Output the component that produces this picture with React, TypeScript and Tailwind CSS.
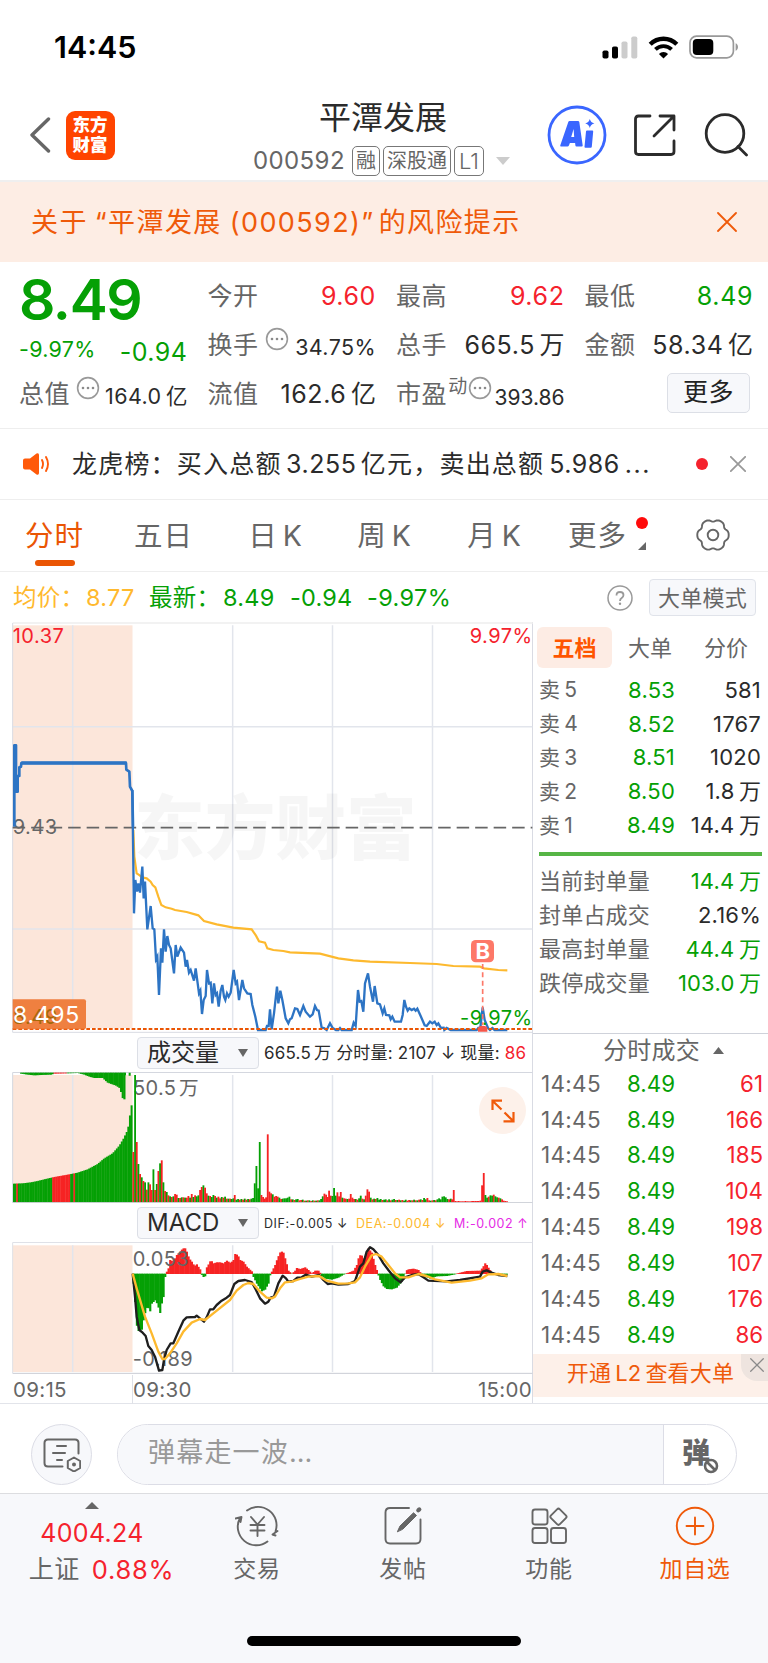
import type { ReactNode } from 'react';

// ─── Types ────────────────────────────────────────────────────────────────────

type Tone = 'up' | 'down' | 'ink';

interface Bar {
  x: number;
  y: number;
  up: boolean;
}

// ─── Quote data ───────────────────────────────────────────────────────────────

const ASKS = [
  { level: 5, price: '8.53', volume: '581' },
  { level: 4, price: '8.52', volume: '1767' },
  { level: 3, price: '8.51', volume: '1020' },
  { level: 2, price: '8.50', volume: '1.8万' },
  { level: 1, price: '8.49', volume: '14.4万' },
];

const LIMIT_STATS: { label: string; value: string; tone: Tone }[] = [
  { label: '当前封单量', value: '14.4万', tone: 'down' },
  { label: '封单占成交', value: '2.16%', tone: 'ink' },
  { label: '最高封单量', value: '44.4万', tone: 'down' },
  { label: '跌停成交量', value: '103.0万', tone: 'down' },
];

const TICKS = ['61', '166', '185', '104', '198', '107', '176', '86'];

const TONES: Record<Tone, string> = {
  up: 'text-[#f5222d]',
  down: 'text-[#05a005]',
  ink: 'text-[#2b2b2b]',
};

// ─── Chart data ───────────────────────────────────────────────────────────────
// All chart coordinates are in plot units, three to a CSS pixel.

const AUCTION_LINE =
  '43,770 43,526 48,526 48,665 53,665 53,618 58,618 58,592 63,590 64,579 378,579 379,599 388,605 390,650 397,663 399,770';

const PRICE_LINE =
  '397,660 402,1030 406,930 411,965 415,940 420,968 427,890 431,985 435,935 442,1078 452,1008 458,1075 463,1078 468,1168 472,1160 477,1275 483,1135 487,1178 492,1078 497,1145 502,1098 507,1125 512,1135 522,1210 527,1125 532,1160 542,1133 552,1148 557,1190 561,1170 567,1208 572,1200 582,1232 587,1195 597,1270 601,1262 606,1332 611,1290 617,1278 621,1200 627,1240 632,1238 637,1300 642,1240 647,1275 651,1270 656,1310 662,1262 667,1245 672,1280 676,1290 681,1270 686,1280 692,1268 701,1200 707,1240 711,1235 717,1290 727,1230 732,1255 742,1270 752,1272 757,1305 766,1340 774,1380 797,1380 801,1368 806,1368 810,1318 815,1378 822,1330 831,1250 835,1300 841,1262 847,1290 857,1345 865,1360 870,1348 875,1345 885,1315 892,1317 900,1335 910,1308 917,1325 930,1340 938,1333 945,1308 951,1320 956,1322 965,1373 972,1374 980,1380 990,1360 998,1374 1008,1380 1015,1380 1020,1374 1025,1380 1055,1380 1061,1358 1067,1368 1074,1260 1079,1295 1084,1293 1090,1325 1095,1240 1104,1210 1110,1250 1119,1295 1124,1248 1132,1300 1140,1303 1148,1330 1153,1315 1158,1335 1168,1336 1172,1348 1177,1340 1184,1355 1203,1355 1208,1335 1213,1290 1218,1310 1223,1322 1228,1315 1235,1320 1242,1316 1247,1322 1252,1316 1262,1338 1274,1366 1280,1368 1290,1355 1297,1360 1304,1355 1310,1365 1315,1360 1323,1374 1331,1373 1333,1380 1340,1374 1352,1380 1430,1380 1435,1374 1441,1374 1448,1312 1454,1350 1464,1374 1470,1380 1477,1374 1484,1380 1522,1380';

const AVERAGE_LINE =
  '400,780 403,860 410,910 418,915 425,922 440,925 452,935 458,945 466,952 475,980 484,1005 497,1012 515,1016 525,1020 560,1026 595,1036 612,1053 650,1063 700,1073 755,1078 768,1097 777,1114 795,1118 802,1135 820,1140 850,1143 870,1147 960,1151 980,1156 1015,1165 1060,1171 1110,1175 1230,1179 1310,1182 1360,1188 1440,1190 1452,1195 1495,1200 1522,1201';

const DIF_LINE =
  '398,731 405,800 410,860 418,900 428,908 437,918 445,948 455,960 465,980 477,1022 487,1020 492,990 500,960 512,940 520,940 535,905 550,872 560,862 585,861 590,857 600,865 612,875 620,862 630,838 640,838 650,825 665,812 680,803 690,795 703,762 715,753 735,750 755,756 768,780 780,805 795,821 805,815 812,803 822,800 835,760 848,737 858,745 865,755 880,753 892,743 905,742 917,734 935,740 958,735 970,750 983,762 995,760 1015,764 1045,762 1065,753 1080,710 1090,700 1100,665 1110,652 1120,658 1135,675 1150,700 1165,720 1185,745 1202,757 1215,742 1235,735 1255,732 1275,745 1285,752 1340,754 1380,750 1440,740 1448,725 1460,721 1475,728 1495,735 1522,738';

const DEA_LINE =
  '398,731 410,775 435,860 455,910 475,965 487,987 495,987 510,970 530,940 550,905 575,878 600,867 615,870 640,850 690,810 710,782 730,765 745,759 760,762 780,785 800,803 815,805 825,800 840,775 855,757 875,755 900,747 925,740 958,738 980,752 1015,761 1045,760 1065,757 1080,742 1095,710 1115,676 1128,672 1145,680 1165,705 1185,730 1200,742 1225,742 1255,732 1280,738 1305,748 1355,758 1410,752 1445,745 1465,733 1495,732 1522,738';

const MACD_SHAPE =
  '400,760 405,815 408,880 415,902 425,898 430,870 437,840 442,828 450,843 455,820 465,810 472,822 480,848 487,808 492,795 495,740 500,725 505,715 510,690 520,695 530,675 540,665 548,655 555,655 560,665 567,685 575,695 583,708 590,703 600,718 603,731 610,740 615,738 620,712 627,700 632,690 640,700 650,697 660,697 670,700 680,692 690,698 695,695 700,690 705,672 713,675 720,690 730,695 740,710 755,724 760,740 770,760 785,783 795,778 805,760 810,735 815,725 825,705 832,685 842,663 850,668 858,695 865,722 875,731 885,722 890,714 900,717 915,712 925,720 935,730 945,722 955,722 962,731 965,738 975,745 995,748 1015,742 1030,733 1045,728 1060,722 1070,705 1075,685 1082,672 1090,685 1095,680 1105,655 1115,668 1125,705 1132,726 1138,745 1150,768 1160,776 1175,777 1190,772 1200,760 1212,745 1217,722 1225,718 1240,716 1255,720 1262,729 1270,737 1290,745 1310,738 1340,737 1365,732 1380,728 1400,723 1440,722 1448,712 1455,700 1460,705 1468,718 1475,727 1490,733 1525,733';

const AUCTION_VOLUME =
  '39,461 65,460 90,457 110,453 130,448 160,441 205,433 230,428 260,418 290,402 310,385 335,370 355,347 368,325 380,300 385,275 390,226 393,226';

const AUCTION_UNMATCHED =
  '60,131 80,134 100,136 120,135 150,134 160,131 200,130 230,129 250,134 265,140 280,144 305,144 320,158 345,167 357,175 366,208 371,208';

// x:top followed by r (up) or g (down)
const VOLUME_BARS =
  '400:366r 405:135g 410:336r 415:402g 420:432r 425:442g 430:453r 435:457g 440:479r 445:457g 450:463r 455:480r 460:418g 465:480r 470:462g 475:423r 480:400g 485:391r 490:457g 495:483r 500:486g 505:496r 510:499g 515:501r 520:499g 525:492r 530:494r 535:504g 540:504r 545:502g 550:502r 555:503g 560:503r 565:498r 570:503g 575:492r 580:501g 585:496r 590:499g 595:496g 600:480r 605:471r 610:466g 615:473r 620:490r 625:497g 630:498r 635:501g 640:495g 645:498r 650:503g 655:500r 660:505r 665:501g 670:503r 675:500g 680:506r 685:506g 690:506r 695:507g 700:505g 704:495r 709:509g 714:507g 719:509r 724:507g 729:509r 734:506g 739:509r 744:507g 749:508r 754:506g 759:504g 764:460g 769:408g 774:475g 779:336g 784:495r 789:501r 794:506r 798:502r 803:313r 808:485r 813:490r 818:493g 823:500r 828:498r 833:500r 838:503g 843:507r 848:506g 853:505g 858:505g 863:503g 868:500g 873:508r 878:508g 883:510r 888:508g 893:507g 898:511r 903:510r 908:509g 913:512r 918:512g 923:511r 928:511g 933:513r 938:511g 943:512r 948:512g 953:511r 958:511g 963:507g 968:499g 973:491r 978:494r 983:501r 987:482r 992:497r 997:498g 1002:474g 1007:497g 1012:487r 1017:499r 1022:486r 1027:503g 1032:505r 1037:506r 1042:507g 1047:506r 1052:492r 1057:503r 1062:507r 1067:507g 1072:509r 1077:505g 1082:497g 1087:506r 1092:508g 1097:497r 1102:478r 1107:485r 1112:503g 1117:508r 1122:506g 1127:507r 1132:504g 1137:509g 1142:507g 1147:510r 1152:509g 1157:508g 1162:511r 1167:508g 1172:511r 1177:509g 1182:507g 1187:510r 1192:510g 1197:509r 1202:511g 1207:510r 1212:512g 1217:509g 1222:512r 1227:510r 1232:511g 1237:511r 1242:509g 1247:511r 1252:511g 1257:509r 1262:508g 1267:510r 1272:504g 1277:508g 1282:504r 1287:511r 1292:512g 1297:511r 1302:510g 1307:511r 1312:508g 1317:505g 1322:508g 1327:500g 1332:499g 1337:502g 1342:507g 1347:508r 1352:506g 1356:508r 1361:480r 1366:513r 1371:514r 1376:513r 1381:514r 1386:514r 1391:514r 1396:513r 1401:514r 1406:514r 1411:514r 1416:513r 1421:513r 1426:513r 1431:513r 1436:513r 1441:512r 1446:466r 1451:429r 1456:495g 1461:503g 1466:500r 1471:496g 1476:497g 1481:494r 1486:499g 1491:502g 1496:503r 1501:505g 1506:508r 1511:512r 1516:513r 1521:514r';

function samples(points: string, step: number) {
  const pts = points.split(' ').map((p) => p.split(',').map(Number));
  const out: { x: number; y: number }[] = [];
  let i = 0;
  for (let x = pts[0][0]; x < pts[pts.length - 1][0]; x += step) {
    while (pts[i + 1][0] < x) i++;
    const [x0, y0] = pts[i];
    const [x1, y1] = pts[i + 1];
    out.push({ x, y: y0 + ((y1 - y0) * (x - x0)) / (x1 - x0) });
  }
  return out;
}

const volumeBars: Bar[] = VOLUME_BARS.split(' ').map((entry) => {
  const [x, rest] = entry.split(':');
  return { x: Number(x), y: parseInt(rest, 10), up: rest.endsWith('r') };
});

const auctionIsUp = (x: number) => (x >= 44 && x < 49) || (x >= 154 && x < 210) || (x >= 219 && x < 224);

// Six-lobed gear outline, radius swinging around 15px
const GEAR_POINTS = Array.from({ length: 90 }, (_, i) => {
  const a = (i * Math.PI) / 45;
  const r = 14.8 + 1.2 * Math.cos(6 * a) - 0.3 * Math.cos(12 * a);
  return `${(17 + r * Math.cos(a)).toFixed(2)},${(17 + r * Math.sin(a)).toFixed(2)}`;
}).join(' ');

// ─── Small pieces ─────────────────────────────────────────────────────────────

/** Number with its 万 / 亿 unit set slightly apart */
function Figure({ value }: { value: string }) {
  const unit = value.match(/[万亿]$/)?.[0];
  return (
    <>
      {unit ? value.slice(0, -1) : value}
      {unit && <span className="ml-[4.5px] tracking-normal">{unit}</span>}
    </>
  );
}

function MoreDots({ className }: { className?: string }) {
  return (
    <svg className={`w-6 h-6 shrink-0 ${className ?? ''}`} viewBox="0 0 24 24" fill="none" stroke="#999" strokeWidth={1.6}>
      <circle cx="12" cy="12" r="10.4" />
      <g fill="#8a8a8a" stroke="none">
        <circle cx="7" cy="12" r="1.3" />
        <circle cx="12" cy="12" r="1.3" />
        <circle cx="17" cy="12" r="1.3" />
      </g>
    </svg>
  );
}

function Cross({ className, width }: { className: string; width: number }) {
  return (
    <svg className={className} viewBox="0 0 20 20" fill="none" stroke="currentColor" strokeWidth={width} strokeLinecap="round">
      <path d="M1 1 19 19M19 1 1 19" />
    </svg>
  );
}

// ─── Status bar and header ────────────────────────────────────────────────────

function StatusBar() {
  return (
    <div className="flex h-[94px] items-center justify-between pl-[54px] pr-[29px]">
      <span className="text-[30.5px] leading-none font-semibold text-black">14:45</span>
      <div className="flex items-center gap-[10px]">
        <svg className="h-[23px] w-9" viewBox="0 0 36 23">
          <rect x="0.5" y="14.5" width="6" height="8" rx="1.8" fill="#000" />
          <rect x="10" y="10.5" width="6" height="12" rx="1.8" fill="#000" />
          <rect x="19.5" y="5.5" width="6" height="17" rx="1.8" fill="#ccc" />
          <rect x="29.3" y="0.5" width="6" height="22" rx="1.8" fill="#ccc" />
        </svg>
        <svg className="h-[23px] w-[31px]" viewBox="0 0 31 23" fill="none" stroke="#000">
          <path d="M2.2 8.2a19 19 0 0 1 26.6 0" strokeWidth="4.4" />
          <path d="M7.4 13.4a11.6 11.6 0 0 1 16.2 0" strokeWidth="3.8" />
          <path d="M15.5 22.5 10.9 17.9a6.6 6.6 0 0 1 9.2 0z" fill="#000" stroke="none" />
        </svg>
        <svg className="h-6 w-[50px]" viewBox="0 0 50 24">
          <rect x="1" y="1.2" width="43.4" height="21.6" rx="6.5" fill="none" stroke="#999" strokeWidth="1.7" />
          <rect x="3.8" y="4" width="20.5" height="16" rx="4" fill="#000" />
          <path d="M46.6 8.2v7.6c1.5-.6 2.4-2 2.4-3.8s-.9-3.2-2.4-3.8z" fill="#999" />
        </svg>
      </div>
    </div>
  );
}

function Badge({ children }: { children: ReactNode }) {
  return (
    <span className="flex h-[30px] items-center rounded-[5px] border border-[#777] px-[3px] text-[20px] leading-none text-[#666]">
      {children}
    </span>
  );
}

function Header() {
  return (
    <header className="flex h-[88px] items-center border-b-2 border-[#efefef] pl-[29px] pr-[20px]">
      <svg className="mt-[-4px] h-9 w-[22px]" viewBox="0 0 22 36" fill="none" stroke="#666" strokeWidth="3.4" strokeLinecap="round" strokeLinejoin="round">
        <path d="M19.5 2 3 18l16.5 16" />
      </svg>
      <div className="mt-[-4px] ml-[14.5px] flex h-[49px] w-[49px] flex-col items-center justify-center rounded-[9px] bg-[#ff4400] text-[17.5px] leading-[20px] font-black text-white">
        <span>东方</span>
        <span>财富</span>
      </div>
      <div className="ml-[138.5px] flex flex-col">
        <h1 className="mt-[3px] ml-[66px] text-[32px] leading-[40px] text-[#2b2b2b]">平潭发展</h1>
        <div className="mt-[5px] flex h-[36px] items-center">
          <span className="mr-[7px] text-[24px] leading-none tracking-[0.4px] text-[#666]">000592</span>
          <div className="flex gap-[3px]">
            <Badge>融</Badge>
            <Badge>深股通</Badge>
            <Badge>
              <span className="px-px text-[22px] font-light">L1</span>
            </Badge>
          </div>
          <svg className="ml-[12px] h-2 w-[14px]" viewBox="0 0 14 8" fill="#ccc">
            <path d="M0 0h14L7 8z" />
          </svg>
        </div>
      </div>
      <div className="mt-[-5px] ml-auto flex items-center">
        <svg className="h-[60px] w-[60px]" viewBox="0 0 60 60" fill="none">
          <circle cx="30" cy="30" r="28" stroke="#3a66ff" strokeWidth="2.8" />
          <path
            d="M22.5 16h8.5q1 0 1.3 1l3.4 23.600q.1 1-1 1h-5.200q-1 0-1.100-1l-.3-2.600h-5.200l-1 2.600q-.4 1-1.400 1h-6.400q-1.300 0-.8-1.300l8-23.300q.3-1 1.200-1zM26.600 24l-2.400 8h3z"
            fill="#3a66ff"
            fillRule="evenodd"
          />
          <path d="M40 25.500h5.300q1 0 .9 1l-1.400 15.300q-.1 1-1.100 1h-5.300q-1 0-.9-1l1.500-15.300q.1-1 1-1zM42.800 14q.9 3.600 4.600 4.400-3.700.9-4.600 4.500-.9-3.600-4.600-4.500 3.700-.8 4.600-4.400z" fill="#3a66ff" />
        </svg>
        <svg className="ml-[27px] h-[42px] w-[42px]" viewBox="0 0 42 42" fill="none" stroke="#2b2b2b" strokeWidth="2.8" strokeLinecap="round" strokeLinejoin="round">
          <path d="M16 2H4.500Q1.500 2 1.500 5v32.500q0 3 3 3H37q3 0 3-3V27M26 2h14v14M39.500 2.500 20 22" />
        </svg>
        <svg className="ml-[28px] h-[44px] w-[44px]" viewBox="0 0 44 44" fill="none" stroke="#2b2b2b" strokeWidth="2.800" strokeLinecap="round">
          <circle cx="21" cy="20.500" r="18.800" />
          <path d="m34 33.500 8.500 8.500" />
        </svg>
      </div>
    </header>
  );
}

function RiskBanner() {
  return (
    <div className="flex h-20 items-center justify-between bg-[#fdede4] pl-[31px] pr-[31px] text-[#ef5a0a]">
      <span className="flex text-[27px] leading-none tracking-[1.4px]">
        <span>关于</span>
        <span className="ml-[7px]">“平潭发展</span>
        <span className="ml-[8px]">(000592)”</span>
        <span className="ml-[4px]">的风险提示</span>
      </span>
      <Cross className="h-5 w-5" width={1.8} />
    </div>
  );
}

// ─── Quote summary ────────────────────────────────────────────────────────────

function Field({ label, value, tone = 'ink', small, dots, sup }: { label: string; value: string; tone?: Tone; small?: boolean; dots?: boolean; sup?: string }) {
  return (
    <div className="flex h-[49px] items-center justify-between">
      <span className="flex items-center text-[25px] leading-none tracking-[0.6px] text-[#666]">
        {label}
        {sup && <span className="mt-[-16px] ml-px text-[19px] leading-none tracking-normal">{sup}</span>}
        {dots && <MoreDots className={sup ? 'mt-[-13px] ml-px' : 'mt-[-13px] ml-[6px]'} />}
      </span>
      {small ? (
        <span className={`mt-[5px] leading-none ${sup ? 'text-[21px]' : 'text-[21.5px] tracking-[0.4px]'} ${TONES[tone]}`}>
          <Figure value={value} />
        </span>
      ) : (
        <span className={`text-[25px] leading-none tracking-[0.6px] ${TONES[tone]}`}>
          <Figure value={value} />
        </span>
      )}
    </div>
  );
}

function QuoteSummary() {
  return (
    <section className="grid h-[167px] grid-cols-4 gap-x-5 border-b border-[#eee] pt-[10px] pl-[19px] pr-[15px]">
      <div>
        <div className="mt-[-1px] flex h-[56px] items-center text-[57px] leading-none font-semibold tracking-[-1.4px] text-[#05a005]">8.49</div>
        <div className="mt-[1px] flex h-[42px] items-center justify-between pt-[2px] text-[#05a005]">
          <span className="text-[21.5px] leading-none tracking-[0.3px]">-9.97%</span>
          <span className="mt-[5px] text-[25px] leading-none tracking-[0.5px]">-0.94</span>
        </div>
        <Field label="总值" value="164.0亿" small dots />
      </div>
      <div>
        <Field label="今开" value="9.60" tone="up" />
        <Field label="换手" value="34.75%" small dots />
        <Field label="流值" value="162.6亿" />
      </div>
      <div>
        <Field label="最高" value="9.62" tone="up" />
        <Field label="总手" value="665.5万" />
        <Field label="市盈" value="393.86" sup="动" small dots />
      </div>
      <div>
        <Field label="最低" value="8.49" tone="down" />
        <Field label="金额" value="58.34亿" />
        <div className="flex h-[49px] items-center justify-end pr-[3px] pb-[4px]">
          <button type="button" className="h-10 w-[83px] rounded-[5px] border border-[#dcdfe6] bg-[#f7f8fb] text-[25px] leading-none tracking-[0.6px] text-[#222]">
            更多
          </button>
        </div>
      </div>
    </section>
  );
}

function NewsTicker() {
  return (
    <div className="flex h-[71px] items-center border-b border-[#eee] pl-[23px] pr-[22px]">
      <svg className="h-[22px] w-[27px]" viewBox="0 0 27 22" fill="none" stroke="#ff5a0a" strokeWidth="1.900" strokeLinecap="round">
        <path d="M2 5.500h5l6.500-5q2.500-1 2.500 1.500v18q0 2.500-2.500 1.500L7 16.500H2q-2 0-2-2v-7q0-2 2-2z" fill="#ff5a0a" stroke="none" />
        <path d="M19 7q2 4 0 8M23 4q4 7 0 14" />
      </svg>
      <span className="ml-[22px] text-[25px] leading-none tracking-[1.200px] text-[#2b2b2b]">
        龙虎榜：买入总额<span className="mx-[4.500px] tracking-[0.5px]">3.255</span>亿元，卖出总额
        <span className="mx-[5px] tracking-[0.5px]">5.986</span>
        <span className="tracking-[1.500px]">...</span>
      </span>
      <span className="ml-auto h-3 w-3 rounded-full bg-[#f5222d]" />
      <Cross className="ml-[22px] h-4 w-4 text-[#999]" width={2.2} />
    </div>
  );
}

// ─── Period tabs ──────────────────────────────────────────────────────────────

function PeriodTabs() {
  return (
    <nav className="flex h-[72px] items-center border-b border-[#eee] pt-px text-[28.500px] leading-none tracking-[1px] text-[#666]">
      <div className="relative w-[109px] pl-[25px] text-[#ea5504]">
        分时
        <span className="absolute top-[38px] left-[35px] h-[6px] w-10 rounded-full bg-[#ea5504]" />
      </div>
      <div className="w-[109px] text-center">五日</div>
      {['日', '周', '月'].map((unit, i) => (
        <div key={unit} className={`flex justify-center gap-[5px] ${i === 0 ? 'w-[115px]' : i === 1 ? 'w-[103px]' : 'w-[117px]'}`}>
          <span>{unit}</span>
          <span>K</span>
        </div>
      ))}
      <div className="relative ml-[15px] w-[78px]">
        更多
        <span className="absolute top-[-5px] left-[68px] h-3 w-3 rounded-full bg-[#ff0a0a]" />
        <svg className="absolute top-[20px] left-[70px] h-2 w-2" viewBox="0 0 8 8" fill="#666">
          <path d="M8 0v8H0z" />
        </svg>
      </div>
      <svg className="mt-[-2px] ml-[49.500px] h-[34px] w-[34px]" viewBox="0 0 34 34" fill="none" stroke="#666" strokeWidth="1.900" strokeLinejoin="round">
        <circle cx="17" cy="17" r="5.300" />
        <polygon points={GEAR_POINTS} />
      </svg>
    </nav>
  );
}

function PriceInfo() {
  return (
    <div className="flex h-[50px] items-center pt-px pl-[13px] pr-[12px] text-[23.500px] leading-none tracking-[0.2px] text-[#05a005]">
      <span className="w-[136px] text-[#ffb92e]">
        均价：<span className="ml-[2px]">8.77</span>
      </span>
      <span className="w-[141px]">
        最新：<span className="ml-[3px]">8.49</span>
      </span>
      <span className="w-[77px]">-0.94</span>
      <span className="tracking-[0.4px]">-9.97%</span>
      <svg className="ml-auto h-[26px] w-[26px]" viewBox="0 0 26 26" fill="none" stroke="#999" strokeWidth="1.500">
        <circle cx="13" cy="13" r="12" />
        <path d="M9.500 10.500q0-3.500 3.500-3.500t3.500 3q0 1.700-1.800 2.900-1.700 1.100-1.700 3" strokeWidth="1.800" />
        <circle cx="13" cy="18.800" r="1.200" fill="#999" stroke="none" />
      </svg>
      <button type="button" className="ml-4 h-[37px] w-[107px] rounded-[4px] border border-[#e0e3ea] bg-[#f7f8fb] text-[22px] leading-none text-[#666]">
        大单模式
      </button>
    </div>
  );
}

// ─── Charts ───────────────────────────────────────────────────────────────────

function GridColumns({ top, bottom }: { top: number; bottom: number }) {
  return (
    <g>
      <rect x="38" y={top} width="359.500" height={bottom - top} fill="#fce6da" />
      <path d={[218, 698, 997.5, 1297.5].map((x) => `M${x} ${top}V${bottom}`).join('')} stroke="#e2e5ec" strokeWidth="4.500" />
    </g>
  );
}

function PriceChart() {
  return (
    <svg className="block h-[412px] w-[533px]" viewBox="0 156 1599 1236" fill="none">
      <GridColumns top={166} bottom={1374} />
      <path d="M38 159H1599" stroke="#eee" strokeWidth="5" />
      <path d="M38 470H1597M38 1077H1597" stroke="#e2e5ec" strokeWidth="4.500" />
      <path d="M38 159V1387H1597" stroke="#d9dbe3" strokeWidth="3" />
      <text x="402" y="852" fontSize="212" fontWeight="900" fill="#000" fillOpacity="0.035">
        东方财富
      </text>
      <path d="M38 773H1597" stroke="#666" strokeWidth="5.500" strokeDasharray="37.500 18" />
      <g fontSize="60" letterSpacing="1.500">
        <text x="38" y="220" fill="#f5222d">10.37</text>
        <text x="1598" y="220" fill="#f5222d" textAnchor="end">9.97%</text>
        <text x="38" y="793" fill="#666">9.43</text>
      </g>
      <polyline points={AVERAGE_LINE} stroke="#fdb92e" strokeWidth="6.500" />
      <polyline points={AUCTION_LINE} stroke="#2d74c4" strokeWidth="8" strokeLinejoin="round" />
      <path d="M64 579H380" stroke="#2d74c4" strokeWidth="11" />
      <polyline points={PRICE_LINE} stroke="#2d74c4" strokeWidth="7" />
      <text x="1598" y="1364" fontSize="60" letterSpacing="1.500" fill="#05a005" textAnchor="end">-9.97%</text>
      <path d="M38 1377H1597" stroke="#ea5504" strokeWidth="6" strokeDasharray="11 6" />
      <path d="M38 1288H252q6 0 6 6V1372q0 6-6 6H38z" fill="#ee7733" fillOpacity="0.920" />
      <text x="38" y="1362" fontSize="60" letterSpacing="1.500" fill="#a5690a">8.49</text>
      <text x="39" y="1360" fontSize="69" letterSpacing="2" fill="#fff">8.495</text>
      <rect x="1413" y="1110" width="69" height="67" rx="14" fill="#fd7868" />
      <text x="1448" y="1167" fontSize="66" fontWeight="700" fill="#fff" textAnchor="middle">B</text>
      <path d="M1448 1182V1365" stroke="#fd7868" strokeWidth="5" strokeDasharray="15 10" />
      <path d="M1434 1385v-10q0-8 14-8t14 8v10z" fill="#f5564a" />
    </svg>
  );
}

function VolumeChart() {
  return (
    <svg className="block h-[131px] w-[533px]" viewBox="0 126 1599 393" fill="none">
      <GridColumns top={135} bottom={516} />
      <path d="M38 518V127.500H1597" stroke="#d4d7df" strokeWidth="3" />
      {samples(AUCTION_VOLUME, 4.9).map(({ x, y }) => (
        <rect key={x} x={x} y={y} width="6" height={517 - y} fill={auctionIsUp(x) ? '#f62323' : '#05a005'} />
      ))}
      {samples(AUCTION_UNMATCHED, 5).map(({ x, y }) => (
        <rect key={x} x={x} y={128} width="6.500" height={y - 128} fill={x > 155 && x < 200 ? '#f62323' : '#05a005'} />
      ))}
      <path d="M373 128h5v8h-5zM386 128h6v9h-6z" fill="#05a005" />
      <g fontSize="60" fill="#666">
        <text x="399" y="196" letterSpacing="1">50.5</text>
        <text x="537" y="195" fontSize="59">万</text>
      </g>
      {volumeBars.map(({ x, y, up }) => (
        <rect key={x} x={x - 2.5} y={y} width="5.500" height={517 - y} fill={up ? '#f62323' : '#05a005'} />
      ))}
      <path d="M38 518H1597" stroke="#c9ccd4" strokeWidth="3" />
    </svg>
  );
}

function MacdChart() {
  return (
    <svg className="block h-[133px] w-[533px]" viewBox="0 636 1599 399" fill="none">
      <GridColumns top={646} bottom={1026} />
      <path d="M38 1030V637.500H1597" stroke="#dfe1e7" strokeWidth="3" />
      <path d="M38 1030H1597" stroke="#c9ccd4" strokeWidth="3" />
      {samples(MACD_SHAPE, 5).map(({ x, y }) => (
        <rect key={x} x={x - 2.5} y={Math.min(y, 731)} width="6.500" height={Math.abs(y - 731) + 1} fill={y < 731 ? '#f62323' : '#05a005'} />
      ))}
      <g fontSize="60" letterSpacing="1" fill="#666">
        <text x="398" y="707">0.053</text>
        <text x="398" y="1007">-0.189</text>
      </g>
      <polyline points={DIF_LINE} stroke="#1f1f1f" strokeWidth="7" strokeLinejoin="round" />
      <polyline points={DEA_LINE} stroke="#fdb92e" strokeWidth="7" strokeLinejoin="round" />
    </svg>
  );
}

function IndicatorSelect({ label }: { label: string }) {
  return (
    <button type="button" className="ml-[137px] flex h-8 w-[122px] shrink-0 items-center justify-between rounded-[4px] border border-[#dcdfe6] bg-[#f7f8fb] pr-[10px] pl-[9px] text-[24px] leading-none text-[#2b2b2b]">
      {label}
      <svg className="h-2 w-[10px]" viewBox="0 0 10 8" fill="#666">
        <path d="M0 0h10L5 8z" />
      </svg>
    </button>
  );
}

function ChartColumn() {
  return (
    <div className="w-[533px] shrink-0 border-r border-[#d9dbe3]">
      <PriceChart />
      <div className="flex h-[38px] items-center">
        <IndicatorSelect label="成交量" />
        <span className="ml-[5px] text-[17px] leading-none tracking-[0.2px] whitespace-nowrap text-[#2b2b2b]">
          665.5<span className="ml-[3px]">万</span> 分时量: 2107 ↓ 现量: <span className="text-[#f5222d]">86</span>
        </span>
      </div>
      <div className="relative">
        <VolumeChart />
        <button type="button" className="absolute top-[15px] left-[479px] flex h-[47px] w-[47px] items-center justify-center rounded-full bg-[#fdf1ea]">
          <svg className="h-6 w-6" viewBox="0 0 24 24" fill="none" stroke="#f05a0a" strokeWidth="2.200">
            <path d="M1.500 11V1.700h9.500M2 2.200 10.500 10.500M22.500 13v9.300H12.500M22 21.800 13.500 13.500" />
          </svg>
        </button>
      </div>
      <div className="flex h-[39px] items-center pt-px">
        <IndicatorSelect label="MACD" />
        <span className="mt-[2px] ml-[5px] flex gap-[8px] text-[12.500px] leading-none tracking-[0.56px] whitespace-nowrap">
          <span className="text-[#2b2b2b]">DIF:-0.005 ↓</span>
          <span className="text-[#fdb92e]">DEA:-0.004 ↓</span>
          <span className="text-[#e52be5]">M:-0.002 ↑</span>
        </span>
      </div>
      <MacdChart />
      <div className="flex h-[29px] text-[20.500px] leading-[29px] tracking-[0.3px] text-[#666]">
        <span className="w-[133px] border-r border-[#dfe1e7] pl-[13px]">09:15</span>
        <span>09:30</span>
        <span className="ml-auto">15:00</span>
      </div>
    </div>
  );
}

// ─── Order book and ticks ─────────────────────────────────────────────────────

function OrderBook() {
  return (
    <div className="h-[412px] border-b border-[#cfd2da] pt-[5px]">
      <div className="flex h-[41px] pl-[4px] text-[22px] leading-none text-[#666]">
        <span className="flex w-[75px] items-center justify-center rounded-[6px] bg-[#fdece4] font-bold text-[#ff5500]">五档</span>
        <span className="flex w-[76px] items-center justify-center">大单</span>
        <span className="flex w-[76px] items-center justify-center">分价</span>
      </div>
      <div className="mt-[5px] pl-[6px] pr-[7px] text-[22px] leading-none tracking-[0.2px]">
        {ASKS.map((row) => (
          <div key={row.level} className="flex h-[33.800px] items-center">
            <span className="flex w-[50px] gap-[4px] text-[21px] text-[#666]">
              <span>卖</span>
              <span>{row.level}</span>
            </span>
            <span className="w-[86px] text-right text-[#05a005]">{row.price}</span>
            <span className="flex-1 text-right text-[#2b2b2b]">
              <Figure value={row.volume} />
            </span>
          </div>
        ))}
      </div>
      <div className="mt-[10.500px] mr-[6px] ml-[6px] h-1 bg-[#56b545]" />
      <div className="mt-[7.500px] pl-[6px] pr-[7px] text-[22px] leading-none tracking-[0.2px]">
        {LIMIT_STATS.map((row) => (
          <div key={row.label} className="flex h-[34px] items-center justify-between">
            <span className="text-[#666]">{row.label}</span>
            <span className={TONES[row.tone]}>
              <Figure value={row.value} />
            </span>
          </div>
        ))}
      </div>
    </div>
  );
}

function TickList() {
  return (
    <div>
      <div className="flex h-[32px] items-center justify-center gap-[13px] pt-px pl-[26px] text-[24px] leading-none tracking-[0.2px] text-[#666]">
        <span>分时成交</span>
        <svg className="h-[7px] w-[11px] self-center" viewBox="0 0 11 7" fill="#666">
          <path d="M0 7h11L5.500 0z" />
        </svg>
      </div>
      <div className="pr-[5px] pl-[8px] text-[22.300px] leading-none">
        {TICKS.map((volume) => (
          <div key={volume} className="flex h-[35.850px] items-center">
            <span className="w-[70px] text-[22.500px] tracking-[0.3px] text-[#666]">14:45</span>
            <span className="w-[64px] text-right text-[#05a005]">8.49</span>
            <span className="flex-1 text-right text-[#f5222d]">{volume}</span>
          </div>
        ))}
      </div>
      <div className="relative mt-px flex h-[43px] items-center justify-center bg-[#fdf0e9] pb-[4px] text-[22px] leading-none tracking-[0.2px] text-[#ef5a0a]">
        开通<span className="mx-[4px]">L2</span>查看大单
        <span className="absolute top-0 right-0 flex h-[27px] w-[27px] items-center justify-center rounded-bl-[16px] bg-[#eee4df] pb-[5px] pl-[4px]">
          <Cross className="h-[14px] w-[14px] text-[#8a8a8a]" width={1.8} />
        </span>
      </div>
    </div>
  );
}

// ─── Comment bar and bottom navigation ────────────────────────────────────────

function CommentBar() {
  return (
    <div className="flex h-[90px] items-start border-b border-[#dcdde0] pt-5 pr-[31px] pl-[31px]">
      <button type="button" className="flex h-[61px] w-[61px] items-center justify-center rounded-full border border-[#dcdde6] bg-[#f7f8fb]">
        <svg className="h-[34px] w-[38px]" viewBox="0 0 38 34" fill="none" stroke="#666" strokeWidth="2" strokeLinecap="round" strokeLinejoin="round">
          <path d="M19.500 28.500H5q-3.500 0-3.500-3.500V5Q1.500 1.500 5 1.500H32q3.500 0 3.500 3.500V15.500M14 8h9M10 15h12M14 22h5M31 19.500l6.200 3.500v7L31 33.500 24.800 30v-7z" />
          <circle cx="31" cy="26.500" r="2" fill="#666" stroke="none" />
        </svg>
      </button>
      <div className="ml-[25px] flex h-[61px] flex-1 overflow-hidden rounded-full border border-[#dcdde6]">
        <div className="flex flex-1 items-center bg-[#f7f8fb] pb-[5px] pl-[30px] text-[27px] leading-none tracking-[1.200px] text-[#999]">
          弹幕走一波<span className="tracking-normal">...</span>
        </div>
        <div className="relative flex w-[73px] items-center border-l border-[#dcdde6] pb-[3px] pl-[18px] text-[28px] leading-none font-black text-[#666]">
          弹
          <svg className="absolute top-[33px] left-[39px] h-4 w-4" viewBox="0 0 16 16" fill="#fff" stroke="#666" strokeWidth="2.600">
            <circle cx="8" cy="8" r="6" />
            <path d="m4 4 8 8" />
          </svg>
        </div>
      </div>
    </div>
  );
}

function NavItem({ label, active, children }: { label: string; active?: boolean; children: ReactNode }) {
  return (
    <div className={`flex w-[146px] flex-col items-center pt-[10px] text-[23px] leading-none tracking-[0.7px] ${active ? 'text-[#ef5a0a]' : 'text-[#666]'}`}>
      <svg className="h-11 w-11" viewBox="0 0 44 44" fill="none" stroke="currentColor" strokeWidth="1.900" strokeLinecap="round" strokeLinejoin="round">
        {children}
      </svg>
      <span className="mt-[10px]">{label}</span>
    </div>
  );
}

function BottomNav() {
  return (
    <nav className="relative flex h-[169px] bg-[#f7f8fb]">
      <div className="flex w-[184px] flex-col items-center pt-[8px]">
        <svg className="h-[7px] w-[14px]" viewBox="0 0 14 7" fill="#666">
          <path d="M0 7h14L7 0z" />
        </svg>
        <span className="mt-[12px] text-[25px] leading-none tracking-[0.3px] text-[#f5222d]">4004.24</span>
        <div className="mt-[11px] flex items-center gap-[12px] pl-[19px] text-[25px] leading-none tracking-[0.500px]">
          <span className="text-[#666]">上证</span>
          <span className="text-[25.500px] tracking-[0.700px] text-[#f5222d]">0.88%</span>
        </div>
      </div>
      <NavItem label="交易">
        <path d="M12 6.500a18.500 18.500 0 0 1 28.500 21M40.500 31.500 37.500 30.500 42.500 27M32.500 37.500A18.500 18.500 0 0 1 5 14M.5 14.500 6.500 13 5.500 18" />
        <path d="m16 13 6.500 7.500L29 13M22.500 20.500V32M15.500 21h14M15.500 26.500h14" />
      </NavItem>
      <NavItem label="发帖">
        <path d="M28 4H9Q4.500 4 4.500 8.500V35Q4.500 39.500 9 39.500H35Q39.500 39.500 39.500 35V15.500" />
        <path d="M16.500 27.500 19 22 32.500 8.800 35.500 11.500 22 25z" fill="currentColor" strokeWidth="1" />
        <path d="m37.300 6.300 1-.9" strokeWidth="4.200" />
      </NavItem>
      <NavItem label="功能">
        <rect x="5.500" y="5.500" width="15" height="15" rx="2.500" />
        <rect x="5.500" y="24" width="15" height="15" rx="2.500" />
        <rect x="24" y="24" width="15" height="15" rx="2.500" />
        <rect x="25.200" y="6.500" width="12.500" height="12.500" rx="2" transform="rotate(45 31.450 12.750)" />
      </NavItem>
      <NavItem label="加自选" active>
        <circle cx="22" cy="22" r="18.200" />
        <path d="M13.500 22h17M22 13.500v17" />
      </NavItem>
      <div className="absolute bottom-[17px] left-[247px] h-[10px] w-[274px] rounded-full bg-black" />
    </nav>
  );
}

// ─── Main export ──────────────────────────────────────────────────────────────

export default function App() {
  return (
    <div className="h-[1663px] w-[768px] overflow-hidden bg-white font-['Inter','Noto_Sans_CJK_SC',sans-serif]">
      <StatusBar />
      <Header />
      <RiskBanner />
      <QuoteSummary />
      <NewsTicker />
      <PeriodTabs />
      <PriceInfo />
      <div className="flex h-[782px] border-b border-[#e2e4ea]">
        <ChartColumn />
        <div className="w-[235px]">
          <OrderBook />
          <TickList />
        </div>
      </div>
      <CommentBar />
      <BottomNav />
    </div>
  );
}
